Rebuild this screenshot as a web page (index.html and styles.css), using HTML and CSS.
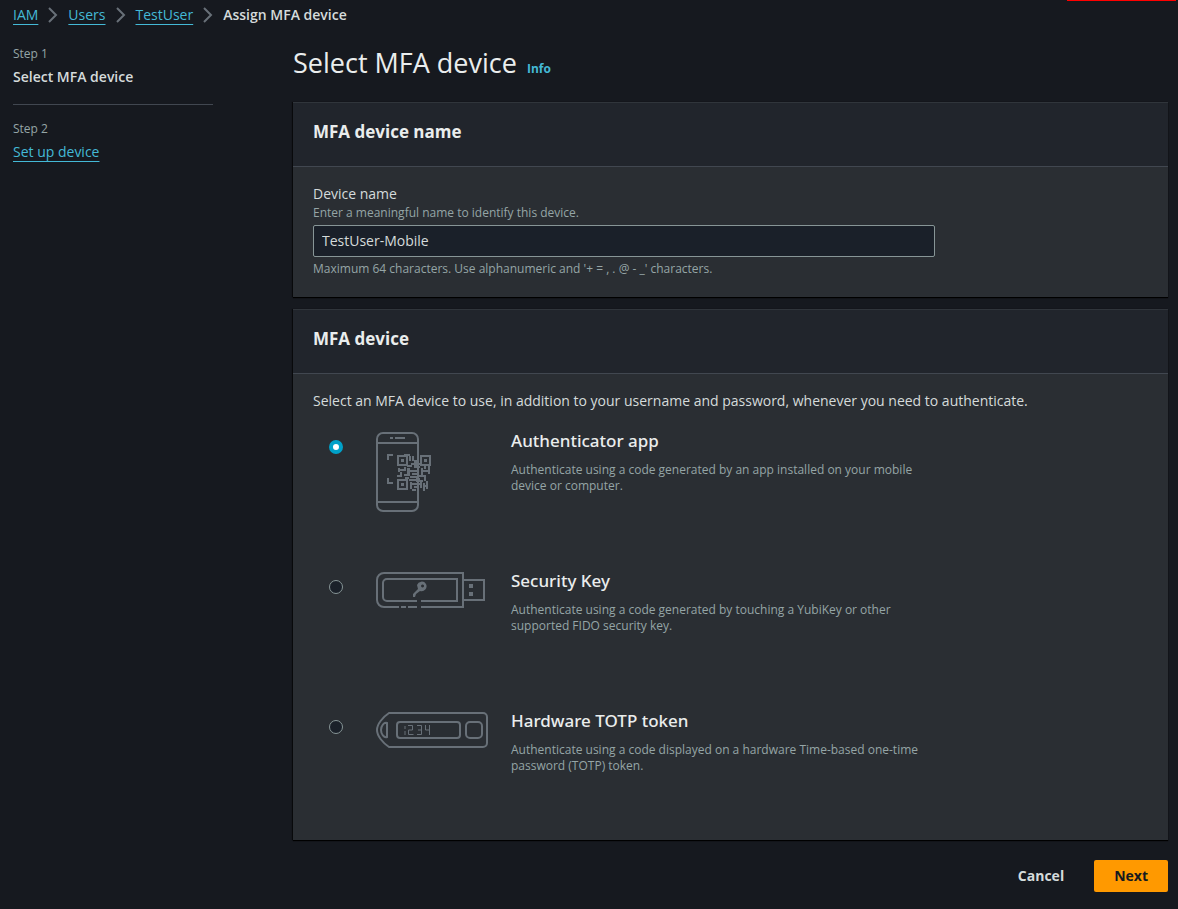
FILE: index.html
```html
<!DOCTYPE html>
<html lang="en">
<head>
<meta charset="utf-8">
<meta name="viewport" content="width=device-width, initial-scale=1">
<title>Assign MFA device</title>
<link rel="stylesheet" href="styles.css">
</head>
<body>
<div class="notice-edge"></div>
<nav class="breadcrumbs" aria-label="Breadcrumbs">
  <ol>
    <li><a href="#iam">IAM</a><svg class="chevron" viewBox="0 0 10 16"><path d="M1 1l7 7-7 7"/></svg></li>
    <li><a href="#users">Users</a><svg class="chevron" viewBox="0 0 10 16"><path d="M1 1l7 7-7 7"/></svg></li>
    <li><a href="#testuser">TestUser</a><svg class="chevron" viewBox="0 0 10 16"><path d="M1 1l7 7-7 7"/></svg></li>
    <li class="current">Assign MFA device</li>
  </ol>
</nav>
<div class="layout">
  <aside class="steps">
    <div class="step">
      <div class="step-number">Step 1</div>
      <div class="step-title">Select MFA device</div>
    </div>
    <div class="step">
      <div class="step-number">Step 2</div>
      <a href="#setup">Set up device</a>
    </div>
  </aside>
  <main class="content">
    <header class="page-header">
      <h1>Select MFA device</h1>
      <a class="info" href="#info">Info</a>
    </header>
    <form class="form">
      <section class="panel">
        <h2>MFA device name</h2>
        <div class="panel-body name-body">
          <div class="field">
            <label for="device-name">Device name</label>
            <p class="hint">Enter a meaningful name to identify this device.</p>
            <input class="text-input" id="device-name" type="text" value="TestUser-Mobile">
            <p class="hint">Maximum 64 characters. Use alphanumeric and '+ = , . @ - _' characters.</p>
          </div>
        </div>
      </section>
      <section class="panel">
        <h2>MFA device</h2>
        <div class="panel-body device-body">
          <p class="intro">Select an MFA device to use, in addition to your username and password, whenever you need to authenticate.</p>
          <div class="option">
            <input type="radio" name="device" id="app" checked>
            <svg class="art" viewBox="0 0 112 80" width="112" height="80">
              <g class="line">
                <rect x="1" y="1" width="41" height="78" rx="6"/>
                <path d="M1 11h41M1 70h41M14 6h3M19 6h10"/>
                <path d="M12 28v-5h5M12 46v5h5"/>
                <rect x="22" y="24" width="9" height="9"/>
                <rect x="45" y="24" width="9" height="9"/>
                <rect x="22" y="48" width="9" height="9"/>
              </g>
              <path class="solid" d="M25 27h3v3h-3zM48 27h3v3h-3zM25 51h3v3h-3zM28 22h6v2h-6zM33 24h2v5h-2zM36 24h2v5h-2zM38 28h3v6h-3zM35 31h4v2h-4zM31 33h5v2h-5zM41 31h4v2h-4zM22 36h2v4h-2zM24 37h5v2h-5zM28 35h2v4h-2zM31 36h3v7h-3zM34 38h8v2h-8zM38 34h6v2h-6zM45 36h2v7h-2zM47 38h5v2h-5zM52 34h2v8h-2zM48 34h2v3h-2zM21 43h5v2h-5zM24 40h2v4h-2zM28 42h6v2h-6zM36 41h6v2h-6zM34 44h9v2h-9zM29 45h4v2h-4zM43 43h7v2h-7zM48 45h2v4h-2zM33 47h7v2h-7zM40 46h4v4h-4zM44 48h3v2h-3zM34 50h2v7h-2zM36 51h8v2h-8zM38 54h4v2h-4zM44 50h2v6h-2zM47 51h2v8h-2zM49 53h2v2h-2zM50 49h2v8h-2zM36 57h4v2h-4z"/>
            </svg>
            <label for="app"><span class="option-title">Authenticator app</span><span class="option-text">Authenticate using a code generated by an app installed on your mobile device or computer.</span></label>
          </div>
          <div class="option">
            <input type="radio" name="device" id="key">
            <svg class="art" viewBox="0 0 112 80" width="112" height="80">
              <g class="line">
                <path d="M23 35H8a7 7 0 0 1-7-7V8a7 7 0 0 1 7-7h79v34H45M25 35h5M32 35h9"/>
                <path d="M41 29H11a4 4 0 0 1-4-4V11a4 4 0 0 1 4-4h70v22H45"/>
                <path d="M87 8h21v20H87"/>
              </g>
              <path class="solid" d="M93 12h4v4h-4zM93 20h4v4h-4z"/>
              <path class="solid" fill-rule="evenodd" d="M41 13a5 5 0 0 1 9-1 5 5 0 0 1-6 7l-4 3-1 3h-2v-3l5-5zM46.500 12.500a1.500 1.500 0 1 0 .1 0z"/>
            </svg>
            <label for="key"><span class="option-title">Security Key</span><span class="option-text">Authenticate using a code generated by touching a YubiKey or other supported FIDO security key.</span></label>
          </div>
          <div class="option">
            <input type="radio" name="device" id="token">
            <svg class="art" viewBox="0 0 112 80" width="112" height="80">
              <g class="line">
                <path d="M13 1h94a4 4 0 0 1 4 4v26a4 4 0 0 1-4 4H13C7 31 1 24 1 18S7 5 13 1z"/>
                <path d="M11 11v14c-3 1-6-3-6-7s3-8 6-7z"/>
                <rect x="21" y="10" width="63" height="16" rx="3"/>
                <rect x="90" y="10" width="16" height="16" rx="4"/>
              </g>
              <path class="digits" d="M29 14v3M29 19v4M32 13.500h4.500v4.500h-4v4.500h5M41 13.500h4.500v9h-4.500M42 18h3M49.500 13v5h4M53.500 13v10"/>
            </svg>
            <label for="token"><span class="option-title">Hardware TOTP token</span><span class="option-text">Authenticate using a code displayed on a hardware Time-based one-time password (TOTP) token.</span></label>
          </div>
        </div>
      </section>
      <div class="actions">
        <button class="btn" type="button">Cancel</button>
        <button class="btn primary" type="submit">Next</button>
      </div>
    </form>
  </main>
</div>
</body>
</html>
```
FILE: styles.css
```css
* { box-sizing: border-box; }
html { background: #16191f; }
body {
  margin: 0;
  padding: 4px 10px 16px 13px;
  color: #d5dbdb;
  font: 14px/22px "Open Sans", "Noto Sans", sans-serif;
}
h1, h2, p, ol { margin: 0; padding: 0; }
a {
  color: #44b9d6;
  text-decoration: underline;
  text-decoration-thickness: 1px;
  text-underline-offset: 4px;
}
.notice-edge {
  position: absolute;
  top: 0;
  right: 2px;
  width: 109px;
  height: 1px;
  background: #f00;
}
.breadcrumbs ol { display: flex; list-style: none; }
.breadcrumbs li { display: flex; align-items: center; }
.breadcrumbs .current { font-weight: 600; }
.chevron {
  width: 10px;
  height: 16px;
  margin: 0 10px;
  fill: none;
  stroke: #687078;
  stroke-width: 2;
}
.layout { display: grid; grid-template-columns: 200px 1fr; column-gap: 80px; }
.steps { padding-top: 18px; }
.step + .step { margin-top: 14px; padding-top: 14px; border-top: 1px solid #414750; }
.step-number { font-size: 12px; line-height: 20px; color: #95a5a6; }
.step-title { line-height: 26px; font-weight: 600; }
.step a { line-height: 26px; }
.page-header { display: flex; align-items: baseline; gap: 10px; padding-top: 19px; }
h1 { color: #eaeded; font-size: 27px; line-height: 36px; font-weight: 400; }
.info { font-size: 12px; font-weight: 700; text-decoration: none; }
.form { display: grid; gap: 12px; margin-top: 21px; }
.panel { background: #2a2e33; border-top: 1px solid #30353b; box-shadow: 0 1px 1px #000, -1px 0 1px #0008; }
h2 {
  padding: 16px 20px 21px;
  color: #eaeded;
  background: #21252c;
  border-bottom: 1px solid #414750;
  font-size: 17px;
  line-height: 26px;
  font-weight: 700;
}
.panel-body { padding: 16px 20px 20px; }
.device-body { padding-bottom: 8px; }
.name-body { display: grid; grid-template-columns: 3fr 1fr; column-gap: 6px; }
.field label { display: block; }
.hint { color: #95a5a6; font-size: 12px; line-height: 16px; }
.text-input {
  display: block;
  width: 100%;
  height: 32px;
  margin: 4px 0;
  padding: 0 8px 2px;
  color: #d5dbdb;
  background: #1a2029;
  border: 1px solid #879596;
  border-radius: 2px;
  font: inherit;
}
.option { display: grid; grid-template-columns: 63px 135px 408px; min-height: 140px; padding-top: 20px; }
.option input {
  appearance: none;
  width: 14px;
  height: 14px;
  margin: 8px 0 0 16px;
  background: #1a2029;
  border: 1px solid #879596;
  border-radius: 50%;
}
.option input:checked { background: #fff; border: 4px solid #00a1c9; }
.option-title { display: block; color: #eaeded; font: 500 17px/18px "Noto Sans", "Open Sans", sans-serif; }
.option-text { display: block; margin-top: 12px; color: #95a5a6; font-size: 12px; line-height: 16px; }
.line { fill: none; stroke: #687078; stroke-width: 2; }
.solid { fill: #687078; }
.digits { fill: none; stroke: #687078; stroke-width: 1; }
.actions { display: flex; justify-content: flex-end; gap: 10px; margin-top: 8px; }
.btn {
  height: 32px;
  padding: 0 20px;
  color: #d5dbdb;
  background: transparent;
  border: 0;
  border-radius: 2px;
  font: 700 14px/22px "Open Sans", "Noto Sans", sans-serif;
}
.primary { color: #16191f; background: #ff9900; }
```
